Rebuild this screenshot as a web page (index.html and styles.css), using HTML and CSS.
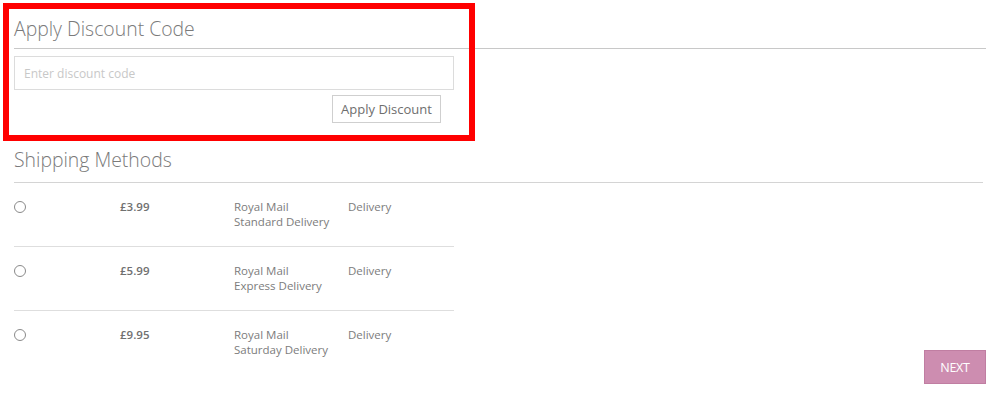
FILE: index.html
```html
<!DOCTYPE html>
<html lang="en">
<head>
<meta charset="utf-8">
<title>Checkout</title>
<link rel="stylesheet" href="styles.css">
</head>
<body>
<div class="page">
  <section class="discount">
    <h2 class="section-title title-discount">Apply Discount Code</h2>
    <input class="code-input" type="text" placeholder="Enter discount code">
    <div class="discount-actions">
      <button class="btn-apply" type="button">Apply Discount</button>
    </div>
  </section>

  <section class="shipping">
    <h2 class="section-title title-shipping">Shipping Methods</h2>
    <div class="shipping-body">
      <div class="methods">
        <label class="method">
          <span class="radio"></span>
          <span class="price">£3.99</span>
          <span class="name">Royal Mail<br>Standard Delivery</span>
          <span class="type">Delivery</span>
        </label>
        <label class="method">
          <span class="radio"></span>
          <span class="price">£5.99</span>
          <span class="name">Royal Mail<br>Express Delivery</span>
          <span class="type">Delivery</span>
        </label>
        <label class="method last">
          <span class="radio"></span>
          <span class="price">£9.95</span>
          <span class="name">Royal Mail<br>Saturday Delivery</span>
          <span class="type">Delivery</span>
        </label>
      </div>
      <div class="next-wrap">
        <button class="btn-next" type="button">NEXT</button>
      </div>
    </div>
  </section>

  <div class="highlight"></div>
</div>
</body>
</html>
```

FILE: styles.css
```css
* { box-sizing: border-box; }

html, body {
  margin: 0;
  padding: 0;
  background: #fff;
}

body {
  font-family: "Open Sans", "Liberation Sans", sans-serif;
  color: #777;
}

.page {
  position: relative;
  padding: 15px 14px 0 14px;
  width: 1000px;
  height: 404px;
}

.section-title {
  margin: 0;
  font-size: 19.4px;
  font-weight: 300;
  line-height: 28px;
  color: #7a7a7a;
  border-bottom: 1px solid #c8c8c8;
}

.title-discount {
  padding-bottom: 5px;
}

.code-input {
  display: block;
  margin-top: 7px;
  width: 440px;
  height: 34px;
  border: 1px solid #dcdcdc;
  padding: 0 9px;
  font-family: "Open Sans", "Liberation Sans", sans-serif;
  font-size: 12px;
  color: #777;
  outline: none;
}

.code-input::placeholder {
  color: #c8c8c8;
}

.discount-actions {
  width: 440px;
  display: flex;
  justify-content: flex-end;
  padding-right: 13px;
  margin-top: 5px;
}

.btn-apply {
  width: 109px;
  height: 28px;
  background: #fff;
  border: 1px solid #cfcfcf;
  font-family: "Open Sans", "Liberation Sans", sans-serif;
  font-size: 13px;
  color: #6e6e6e;
  padding: 0;
}

.shipping {
  margin-top: 23px;
}

.title-shipping {
  padding-bottom: 8px;
  margin-right: 3px;
  border-bottom-color: #d4d4d4;
}

.shipping-body {
  display: flex;
  justify-content: space-between;
}

.methods {
  width: 440px;
}

.method {
  display: grid;
  grid-template-columns: 106px 114px 114px 1fr;
  padding: 16px 0 17px 0;
  border-bottom: 1px solid #dedede;
  font-size: 11.5px;
  line-height: 15px;
  color: #7c7c7c;
}

.method.last {
  border-bottom: none;
  padding-bottom: 27px;
}

.radio {
  width: 12px;
  height: 12px;
  margin-top: 2px;
  border: 1px solid #8a8a8a;
  border-radius: 50%;
  background: #fff;
}

.price {
  font-weight: 600;
  color: #707070;
}

.next-wrap {
  display: flex;
  align-items: flex-end;
}

.btn-next {
  width: 62px;
  height: 34px;
  background: #cd8db0;
  border: 1px solid #c07ea2;
  color: #fff;
  font-family: "Open Sans", "Liberation Sans", sans-serif;
  font-size: 12.5px;
  padding: 0;
  letter-spacing: -0.3px;
}

.highlight {
  position: absolute;
  left: 3px;
  top: 3px;
  width: 472px;
  height: 138px;
  border: 6px solid #ff0000;
  pointer-events: none;
}
```
